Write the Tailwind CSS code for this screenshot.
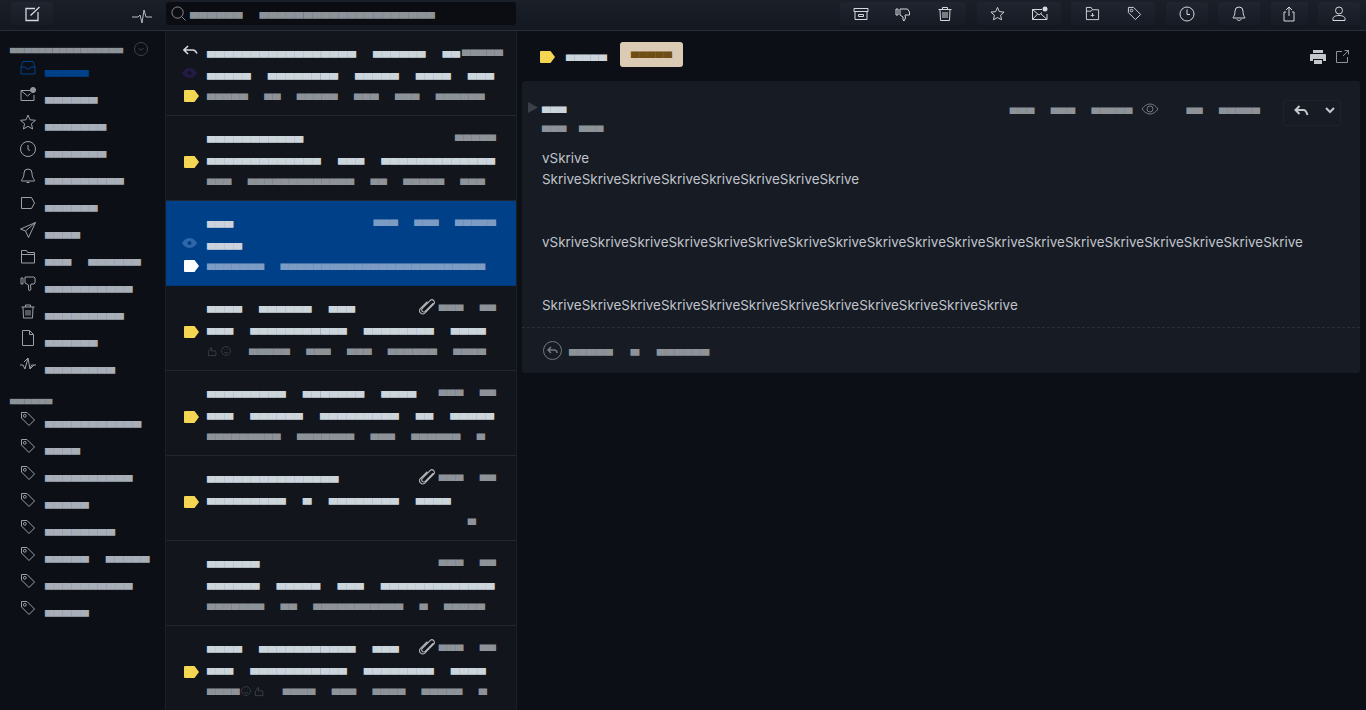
<!DOCTYPE html>
<html lang="en">
<head>
  <meta charset="UTF-8">
  <title>Mail</title>
  <script src="https://cdn.jsdelivr.net/npm/@tailwindcss/browser@4"></script>
</head>
<body class="h-[710px] overflow-hidden bg-[#0c0f16] font-['DejaVu_Sans',sans-serif] leading-none">
  <svg class="hidden">
    <symbol id="flag" viewBox="0 0 15 12"><path fill="currentColor" d="M1 0h9.500L15 6l-4.500 6H1a1 1 0 0 1-1-1V1a1 1 0 0 1 1-1z"/></symbol>
    <symbol id="tag" viewBox="0 0 16 16"><path fill="none" stroke="currentColor" d="M1.500 1.500h5.500l7.500 7.500-5.500 5.500-7.500-7.500z" stroke-linejoin="round"/><circle cx="4.800" cy="4.800" r="1.400" fill="none" stroke="currentColor"/></symbol>
    <symbol id="clip" viewBox="0 0 16 16"><path fill="none" stroke="currentColor" stroke-width="1.100" stroke-linecap="round" d="M14 4.500 6.200 12.300a2 2 0 0 1-2.900-2.900l7.800-7.800a1.300 1.300 0 0 1 3.600 3.600L5.800 14.100A3.200 3.200 0 0 1 1.300 9.600L8 3"/></symbol>
    <symbol id="thumb" viewBox="0 0 16 16"><path fill="none" stroke="currentColor" d="M2 14V8l4-6 1 1-1 4h6l1 2v5H3z"/></symbol>
    <symbol id="smile" viewBox="0 0 16 16"><circle cx="8" cy="8" r="7" fill="none" stroke="currentColor"/><path fill="none" stroke="currentColor" d="M5 6h1M10 6h1M5 10c1.500 1.500 4.500 1.500 6 0"/></symbol>
  </svg>

  <header class="h-[31px] flex border-b border-[#28303c] bg-gradient-to-b from-[#1a1f28] to-[#141820]">
    <div class="w-[166px] flex items-start pt-[2px] pl-[11px]">
      <button class="w-[42px] h-[23px] rounded-[3px] bg-gradient-to-b from-[#1f2530] to-[#171b24] flex items-center justify-center text-[#d5d8dc]">
        <svg class="w-[16px] h-[16px]" viewBox="0 0 16 16" fill="none" stroke="currentColor" stroke-width="1.300"><path d="M11 2.500H2v12h12V6M6.500 9.500l9-8.500"/></svg>
      </button>
      <svg class="w-[20px] h-[16px] ml-[79px] mt-[6px] text-[#b8bcc2]" viewBox="0 0 20 16" fill="none" stroke="currentColor"><path d="M0 9h6l2-2 2 8 2-13 2 7h6"/></svg>
    </div>
    <div class="w-[351px] pt-[2px] pr-[1px]">
      <div class="h-[23px] rounded-[3px] bg-[#0b0d13] flex items-center pl-[5px] text-[11.400px] text-[#8e939a] [word-spacing:13.400px]">
        <svg class="w-[15px] h-[15px] mr-[4px] text-[#8e939a] shrink-0" viewBox="0 0 16 16" fill="none" stroke="currentColor"><circle cx="7" cy="7" r="6"/><path d="m11.500 11.500 4 4"/></svg>
        <span class="block whitespace-pre pb-[2px]">▄▄▄▄▄▄ ▄▄▄▄▄▄▄▄▄▄▄▄▄▄▄▄▄▄▄▄</span>
      </div>
    </div>
    <div class="flex-1 flex justify-end gap-[10.500px] pt-[2px] pr-[6px] text-[#d5d8dc]">
      <div class="h-[23px] w-[126px] rounded-[3px] bg-gradient-to-b from-[#1f2530] to-[#171b24] flex">
        <span class="w-[42px] flex items-center justify-center"><svg class="w-[16px] h-[16px]" viewBox="0 0 16 16" fill="none" stroke="currentColor"><path d="M1 2.500h14v3H1zM2 5.500v8h12v-8M5.500 8.500h5v2h-5z"/></svg></span>
        <span class="w-[42px] flex items-center justify-center"><svg class="w-[16px] h-[16px]" viewBox="0 0 16 16" fill="none" stroke="currentColor"><path d="M1 3h2v6H1zM5 3h7.500l2 3v3h-4.500l.5 3-1.500 3-1-1v-3l-3-2z"/></svg></span>
        <span class="w-[42px] flex items-center justify-center"><svg class="w-[16px] h-[16px]" viewBox="0 0 16 16" fill="none" stroke="currentColor"><path d="M1.500 3.500h13M5.500 3.500v-2h5v2M3 3.500l.5 11h9l.5-11M6 6v6M8 6v6M10 6v6"/></svg></span>
      </div>
      <div class="h-[23px] w-[84px] rounded-[3px] bg-gradient-to-b from-[#1f2530] to-[#171b24] flex">
        <span class="w-[42px] flex items-center justify-center"><svg class="w-[15px] h-[15px]" viewBox="0 0 16 16" fill="none" stroke="currentColor"><path d="m8 1.500 2 4.500 5 .5-3.700 3.300 1 4.900L8 12.300l-4.300 2.400 1-4.900L1 6.500 6 6z"/></svg></span>
        <span class="w-[42px] flex items-center justify-center"><svg class="w-[16px] h-[16px]" viewBox="0 0 16 16" fill="none" stroke="currentColor"><path d="M10 3.500H.5v10h14.500V8M.5 3.500 7 9l3-2.500M.5 13.500 5.500 8M15 13.500 9 8"/><circle cx="13" cy="3" r="2.500" fill="#d5d8dc" stroke="none"/></svg></span>
      </div>
      <div class="h-[23px] w-[84px] rounded-[3px] bg-gradient-to-b from-[#1f2530] to-[#171b24] flex">
        <span class="w-[42px] flex items-center justify-center"><svg class="w-[15px] h-[15px]" viewBox="0 0 16 16" fill="none" stroke="currentColor"><path d="M1.500 14.500v-13h5l1.500 2.500h6.500v10.500zM1.500 5.500h5l1.500-1.500M8 7.500v4M6 10h4"/></svg></span>
        <span class="w-[42px] flex items-center justify-center"><svg class="w-[15px] h-[15px]"><use href="#tag"/></svg></span>
      </div>
      <div class="h-[23px] w-[42px] rounded-[3px] bg-gradient-to-b from-[#1f2530] to-[#171b24] flex items-center justify-center">
        <svg class="w-[16px] h-[16px]" viewBox="0 0 16 16" fill="none" stroke="currentColor"><circle cx="8" cy="8" r="7"/><path d="M8 3.500V8.500h3"/></svg>
      </div>
      <div class="h-[23px] w-[42px] rounded-[3px] bg-gradient-to-b from-[#1f2530] to-[#171b24] flex items-center justify-center">
        <svg class="w-[16px] h-[16px]" viewBox="0 0 16 16" fill="none" stroke="currentColor"><path d="M8 1a4 4 0 0 0-4 4c0 5-2 6-2 7h12c0-1-2-2-2-7a4 4 0 0 0-4-4zM6 13c0 2 4 2 4 0"/></svg>
      </div>
      <div class="h-[23px] w-[37px] rounded-[3px] bg-gradient-to-b from-[#1f2530] to-[#171b24] flex items-center justify-center">
        <svg class="w-[16px] h-[16px]" viewBox="0 0 16 16" fill="none" stroke="currentColor"><path d="M5 6H3v9h10V6h-2M8 10V1M5 4l3-3 3 3"/></svg>
      </div>
      <div class="h-[23px] w-[42px] rounded-[3px] bg-gradient-to-b from-[#1f2530] to-[#171b24] flex items-center justify-center">
        <svg class="w-[16px] h-[16px]" viewBox="0 0 16 16" fill="none" stroke="currentColor"><circle cx="8" cy="4.500" r="3.500"/><path d="M2 14.500v-2c0-2 3-3 6-3s6 1 6 3v2z"/></svg>
      </div>
    </div>
  </header>

  <div class="flex h-[679px]">
    <!-- sidebar -->
    <aside class="w-[166px] border-r border-[#1b1f27] bg-[#0c0f16]">
      <div class="h-[26px] pt-[12px] pl-[10px] flex items-start text-[9.200px] text-[#8e939a]">
        <span class="whitespace-pre">▄▄▄▄▄▄▄▄▄▄▄▄▄▄▄▄</span>
        <svg class="w-[14px] h-[14px] ml-[11px] -mt-[1px] text-[#3f434b]" viewBox="0 0 14 14" fill="none" stroke="currentColor"><circle cx="7" cy="7" r="6.500"/><path d="m4.500 6 2.500 2.500L9.500 6"/></svg>
      </div>
      <nav class="text-[11.400px] text-[#a9afb9] [word-spacing:13.400px] [&_svg]:text-[#9ca1a9]">
        <a class="h-[27px] flex items-center pl-[20px] text-[#004289]"><svg class="w-[16px] h-[16px] -mt-[6px] mr-[9px] !text-[#004289]" viewBox="0 0 16 16" fill="none" stroke="currentColor"><path d="M3 1.500h10l2 5.500v7H1V7zM1 7h4.500l1 2h3l1-2H15"/></svg><span class="whitespace-pre">▄▄▄▄▄</span></a>
        <a class="h-[27px] flex items-center pl-[20px]"><svg class="w-[16px] h-[16px] -mt-[6px] mr-[9px]" viewBox="0 0 16 16" fill="none" stroke="currentColor"><path d="M10 3.500H1v10h13V8M1 3.500 7.500 9l3-2.500"/><circle cx="13" cy="3" r="2.500" fill="#8e939a"/></svg><span class="whitespace-pre">▄▄▄▄▄▄</span></a>
        <a class="h-[27px] flex items-center pl-[20px]"><svg class="w-[16px] h-[16px] -mt-[6px] mr-[9px]" viewBox="0 0 16 16" fill="none" stroke="currentColor"><path d="m8 1 2 4.800 5.500.5-4.100 3.500 1.200 5.200L8 12.300 3.400 15l1.200-5.200L.5 6.300 6 5.800z"/></svg><span class="whitespace-pre">▄▄▄▄▄▄▄</span></a>
        <a class="h-[27px] flex items-center pl-[20px]"><svg class="w-[16px] h-[16px] -mt-[6px] mr-[9px]" viewBox="0 0 16 16" fill="none" stroke="currentColor"><circle cx="8" cy="8" r="7.500"/><path d="M8 4v4.500l2 1"/></svg><span class="whitespace-pre">▄▄▄▄▄▄▄</span></a>
        <a class="h-[27px] flex items-center pl-[20px]"><svg class="w-[16px] h-[16px] -mt-[6px] mr-[9px]" viewBox="0 0 16 16" fill="none" stroke="currentColor"><path d="M8 1a4 4 0 0 0-4 4c0 5-2.500 6-2.500 8h13c0-2-2.500-3-2.500-8a4 4 0 0 0-4-4zM6.500 14.500h3"/></svg><span class="whitespace-pre">▄▄▄▄▄▄▄▄▄</span></a>
        <a class="h-[27px] flex items-center pl-[20px]"><svg class="w-[16px] h-[16px] -mt-[6px] mr-[9px]" viewBox="0 0 16 16" fill="none" stroke="currentColor"><path d="M1.500 2.500h10l3 5.500-3 5.500h-10z"/></svg><span class="whitespace-pre">▄▄▄▄▄▄</span></a>
        <a class="h-[27px] flex items-center pl-[20px]"><svg class="w-[16px] h-[16px] -mt-[6px] mr-[9px]" viewBox="0 0 16 16" fill="none" stroke="currentColor"><path d="M15.500.5.500 7l5 2 3 6.500zM15.500.5l-10 8.500"/></svg><span class="whitespace-pre">▄▄▄▄</span></a>
        <a class="h-[27px] flex items-center pl-[20px]"><svg class="w-[16px] h-[16px] -mt-[6px] mr-[9px]" viewBox="0 0 16 16" fill="none" stroke="currentColor"><path d="M1.500 14V1.500h5l1 2h7V14zM1.500 5.500h13"/></svg><span class="whitespace-pre">▄▄▄ ▄▄▄▄▄▄</span></a>
        <a class="h-[27px] flex items-center pl-[20px]"><svg class="w-[16px] h-[16px] -mt-[6px] mr-[9px]" viewBox="0 0 16 16" fill="none" stroke="currentColor"><path d="M1 2h2v6H1zM5 1h9l1 1v5l-1 1h-3l-.5 2 .5 3-1.500 2-1-2V9L5 7z"/></svg><span class="whitespace-pre">▄▄▄▄▄▄▄▄▄▄</span></a>
        <a class="h-[27px] flex items-center pl-[20px]"><svg class="w-[16px] h-[16px] -mt-[6px] mr-[9px]" viewBox="0 0 16 16" fill="none" stroke="currentColor"><path d="M1.500 4h13M5.500 4V2h5v2M3 4l.5 11h9l.5-11M6 7v5.500M8 7v5.500M10 7v5.500"/></svg><span class="whitespace-pre">▄▄▄▄▄▄▄▄▄</span></a>
        <a class="h-[27px] flex items-center pl-[20px]"><svg class="w-[16px] h-[16px] -mt-[6px] mr-[9px]" viewBox="0 0 16 16" fill="none" stroke="currentColor"><path d="M2.500.5h7l4 4v11h-11zM9.500.5v4h4"/></svg><span class="whitespace-pre">▄▄▄▄▄▄</span></a>
        <a class="h-[27px] flex items-center pl-[20px]"><svg class="w-[16px] h-[16px] -mt-[6px] mr-[9px]" viewBox="0 0 16 16" fill="none" stroke="currentColor"><path d="M0 8h3l2 4 3-11 2 11 1.500-4H16M4 5l4-4M10 12l4-4"/></svg><span class="whitespace-pre">▄▄▄▄▄▄▄▄</span></a>
      </nav>
      <div class="h-[27px] pt-[13px] pl-[10px] text-[9.200px] text-[#8e939a]"><span class="whitespace-pre">▄▄▄▄▄▄</span></div>
      <nav class="text-[11.400px] text-[#a9afb9] [word-spacing:13.400px] [&_svg]:text-[#9ca1a9]">
        <a class="h-[27px] flex items-center pl-[20px]"><svg class="w-[16px] h-[16px] -mt-[6px] mr-[9px]"><use href="#tag"/></svg><span class="whitespace-pre">▄▄▄▄▄▄▄▄▄▄▄</span></a>
        <a class="h-[27px] flex items-center pl-[20px]"><svg class="w-[16px] h-[16px] -mt-[6px] mr-[9px]"><use href="#tag"/></svg><span class="whitespace-pre">▄▄▄▄</span></a>
        <a class="h-[27px] flex items-center pl-[20px]"><svg class="w-[16px] h-[16px] -mt-[6px] mr-[9px]"><use href="#tag"/></svg><span class="whitespace-pre">▄▄▄▄▄▄▄▄▄▄</span></a>
        <a class="h-[27px] flex items-center pl-[20px]"><svg class="w-[16px] h-[16px] -mt-[6px] mr-[9px]"><use href="#tag"/></svg><span class="whitespace-pre">▄▄▄▄▄</span></a>
        <a class="h-[27px] flex items-center pl-[20px]"><svg class="w-[16px] h-[16px] -mt-[6px] mr-[9px]"><use href="#tag"/></svg><span class="whitespace-pre">▄▄▄▄▄▄▄▄</span></a>
        <a class="h-[27px] flex items-center pl-[20px]"><svg class="w-[16px] h-[16px] -mt-[6px] mr-[9px]"><use href="#tag"/></svg><span class="whitespace-pre">▄▄▄▄▄ ▄▄▄▄▄</span></a>
        <a class="h-[27px] flex items-center pl-[20px]"><svg class="w-[16px] h-[16px] -mt-[6px] mr-[9px]"><use href="#tag"/></svg><span class="whitespace-pre">▄▄▄▄▄▄▄▄▄▄</span></a>
        <a class="h-[27px] flex items-center pl-[20px]"><svg class="w-[16px] h-[16px] -mt-[6px] mr-[9px]"><use href="#tag"/></svg><span class="whitespace-pre">▄▄▄▄▄</span></a>
      </nav>
    </aside>

    <!-- message list -->
    <section class="w-[351px] border-r border-[#1b1f27] bg-[#12151c] overflow-hidden text-[11.400px] text-[#ccd5dc] [word-spacing:13.400px]">
      <div class="h-[85px] border-b border-[#22262f] pt-[10px]">
        <div class="h-[22px] flex items-center">
          <span class="w-[41px] pl-[17px] shrink-0 text-[#d5d8dc]"><svg class="w-[15px] h-[12px] -translate-y-[1px]" viewBox="0 0 15 12" fill="none" stroke="currentColor" stroke-width="1.600"><path d="M5 1 1 5l4 4M1 5h9c2 0 3 1.500 4 3.500"/></svg></span>
          <span class="whitespace-pre w-[255px]">▄▄▄▄▄▄▄▄▄▄▄▄▄▄▄▄▄ ▄▄▄▄▄▄ ▄▄</span>
          <span class="text-[10.650px] text-[#8e939a] -mt-[4px]">▄▄▄▄▄</span>
        </div>
        <div class="h-[22px] flex items-center">
          <span class="w-[41px] pl-[16px] shrink-0 text-[#231a45]"><svg class="w-[15px] h-[10px] -translate-y-[1px]" viewBox="0 0 15 10"><path fill="currentColor" d="M7.500 0C11 0 14 3 15 5c-1 2-4 5-7.500 5S1 7 0 5c1-2 4-5 7.500-5z"/><circle cx="7.500" cy="5" r="2" fill="#12151c"/></svg></span>
          <span class="whitespace-pre">▄▄▄▄▄ ▄▄▄▄▄▄▄▄ ▄▄▄▄▄ ▄▄▄▄ ▄▄▄</span>
        </div>
        <div class="h-[18px] flex items-center text-[10.650px] text-[#8e939a] [word-spacing:12.900px]">
          <span class="w-[41px] pl-[18px] shrink-0 text-[#f5d652]"><svg class="w-[15px] h-[12px] translate-y-[2px]"><use href="#flag"/></svg></span>
          <span class="whitespace-pre">▄▄▄▄▄ ▄▄ ▄▄▄▄▄ ▄▄▄ ▄▄▄ ▄▄▄▄▄▄</span>
        </div>
      </div>

      <div class="h-[85px] border-b border-[#22262f] pt-[10px]">
        <div class="h-[22px] flex items-center">
          <span class="w-[41px] shrink-0"></span>
          <span class="whitespace-pre">▄▄▄▄▄▄▄▄▄▄▄</span>
          <span class="ml-auto pr-[20px] text-[10.650px] text-[#8e939a] -mt-[4px]">▄▄▄▄▄</span>
        </div>
        <div class="h-[22px] flex items-center">
          <span class="w-[41px] pl-[18px] shrink-0 text-[#f5d652]"><svg class="w-[15px] h-[12px] translate-y-[3px]"><use href="#flag"/></svg></span>
          <span class="whitespace-pre">▄▄▄▄▄▄▄▄▄▄▄▄▄ ▄▄▄ ▄▄▄▄▄▄▄▄▄▄▄▄▄</span>
        </div>
        <div class="h-[18px] flex items-center text-[10.650px] text-[#8e939a] [word-spacing:12.900px]">
          <span class="w-[41px] shrink-0"></span>
          <span class="whitespace-pre">▄▄▄ ▄▄▄▄▄▄▄▄▄▄▄▄▄ ▄▄ ▄▄▄▄▄ ▄▄▄</span>
        </div>
      </div>

      <div class="h-[85px] border-b border-[#003a7a] bg-[#004088] pt-[10px] text-[#ccd3dc]">
        <div class="h-[22px] flex items-center">
          <span class="w-[41px] shrink-0"></span>
          <span class="whitespace-pre">▄▄▄</span>
          <span class="ml-auto pr-[20px] text-[10.650px] text-[#7d9cc3] [word-spacing:12.900px] whitespace-pre -mt-[4px]">▄▄▄ ▄▄▄ ▄▄▄▄▄</span>
        </div>
        <div class="h-[22px] flex items-center">
          <span class="w-[41px] pl-[16px] shrink-0 text-[#2f66a8]"><svg class="w-[15px] h-[10px] -translate-y-[1px]" viewBox="0 0 15 10"><path fill="currentColor" d="M7.500 0C11 0 14 3 15 5c-1 2-4 5-7.500 5S1 7 0 5c1-2 4-5 7.500-5z"/><circle cx="7.500" cy="5" r="2" fill="#004088"/></svg></span>
          <span class="whitespace-pre">▄▄▄▄</span>
        </div>
        <div class="h-[18px] flex items-center text-[10.650px] text-[#7d9cc3] [word-spacing:12.900px]">
          <span class="w-[41px] pl-[18px] shrink-0 text-white"><svg class="w-[15px] h-[12px] translate-y-[2px]"><use href="#flag"/></svg></span>
          <span class="whitespace-pre">▄▄▄▄▄▄▄ ▄▄▄▄▄▄▄▄▄▄▄▄▄▄▄▄▄▄▄▄▄▄▄▄▄</span>
        </div>
      </div>

      <div class="h-[85px] border-b border-[#22262f] pt-[10px]">
        <div class="h-[22px] flex items-center">
          <span class="w-[41px] shrink-0"></span>
          <span class="whitespace-pre">▄▄▄▄ ▄▄▄▄▄▄ ▄▄▄</span>
          <span class="ml-auto pr-[20px] flex items-center text-[10.650px] text-[#8e939a] [word-spacing:12.900px] whitespace-pre -mt-[4px]"><svg class="w-[16px] h-[16px] mr-[4px] text-[#b5b7ba] translate-y-[2px]"><use href="#clip"/></svg>▄▄▄ ▄▄</span>
        </div>
        <div class="h-[22px] flex items-center">
          <span class="w-[41px] pl-[18px] shrink-0 text-[#f5d652]"><svg class="w-[15px] h-[12px] translate-y-[3px]"><use href="#flag"/></svg></span>
          <span class="whitespace-pre">▄▄▄ ▄▄▄▄▄▄▄▄▄▄▄ ▄▄▄▄▄▄▄▄ ▄▄▄▄</span>
        </div>
        <div class="h-[18px] flex items-center text-[10.650px] text-[#8e939a] [word-spacing:12.900px]">
          <span class="w-[41px] shrink-0"></span>
          <svg class="w-[11px] h-[11px] translate-y-[2px] text-[#4a4e56]"><use href="#thumb"/></svg>
          <svg class="w-[10px] h-[10px] translate-y-[2px] ml-[3px] mr-[18px] text-[#4a4e56]"><use href="#smile"/></svg>
          <span class="whitespace-pre">▄▄▄▄▄ ▄▄▄ ▄▄▄ ▄▄▄▄▄▄ ▄▄▄▄</span>
        </div>
      </div>

      <div class="h-[85px] border-b border-[#22262f] pt-[10px]">
        <div class="h-[22px] flex items-center">
          <span class="w-[41px] shrink-0"></span>
          <span class="whitespace-pre">▄▄▄▄▄▄▄▄▄ ▄▄▄▄▄▄▄ ▄▄▄▄</span>
          <span class="ml-auto pr-[20px] text-[10.650px] text-[#8e939a] [word-spacing:12.900px] whitespace-pre -mt-[4px]">▄▄▄ ▄▄</span>
        </div>
        <div class="h-[22px] flex items-center">
          <span class="w-[41px] pl-[18px] shrink-0 text-[#f5d652]"><svg class="w-[15px] h-[12px] translate-y-[3px]"><use href="#flag"/></svg></span>
          <span class="whitespace-pre">▄▄▄ ▄▄▄▄▄▄ ▄▄▄▄▄▄▄▄▄ ▄▄ ▄▄▄▄▄</span>
        </div>
        <div class="h-[18px] flex items-center text-[10.650px] text-[#8e939a] [word-spacing:12.900px]">
          <span class="w-[41px] shrink-0"></span>
          <span class="whitespace-pre">▄▄▄▄▄▄▄▄▄ ▄▄▄▄▄▄▄ ▄▄▄ ▄▄▄▄▄▄ ▄</span>
        </div>
      </div>

      <div class="h-[85px] border-b border-[#22262f] pt-[10px]">
        <div class="h-[22px] flex items-center">
          <span class="w-[41px] shrink-0"></span>
          <span class="whitespace-pre">▄▄▄▄▄▄▄▄▄▄▄▄▄▄▄</span>
          <span class="ml-auto pr-[20px] flex items-center text-[10.650px] text-[#8e939a] [word-spacing:12.900px] whitespace-pre -mt-[4px]"><svg class="w-[16px] h-[16px] mr-[4px] text-[#b5b7ba] translate-y-[2px]"><use href="#clip"/></svg>▄▄▄ ▄▄</span>
        </div>
        <div class="h-[22px] flex items-center">
          <span class="w-[41px] pl-[18px] shrink-0 text-[#f5d652]"><svg class="w-[15px] h-[12px] translate-y-[3px]"><use href="#flag"/></svg></span>
          <span class="whitespace-pre">▄▄▄▄▄▄▄▄▄ ▄ ▄▄▄▄▄▄▄▄ ▄▄▄▄</span>
        </div>
        <div class="h-[18px] flex items-center justify-end pr-[40px] text-[10.650px] text-[#8e939a]">▄</div>
      </div>

      <div class="h-[85px] border-b border-[#22262f] pt-[10px]">
        <div class="h-[22px] flex items-center">
          <span class="w-[41px] shrink-0"></span>
          <span class="whitespace-pre">▄▄▄▄▄▄</span>
          <span class="ml-auto pr-[20px] text-[10.650px] text-[#8e939a] [word-spacing:12.900px] whitespace-pre -mt-[4px]">▄▄▄ ▄▄</span>
        </div>
        <div class="h-[22px] flex items-center">
          <span class="w-[41px] shrink-0"></span>
          <span class="whitespace-pre">▄▄▄▄▄▄ ▄▄▄▄▄ ▄▄▄ ▄▄▄▄▄▄▄▄▄▄▄▄▄</span>
        </div>
        <div class="h-[18px] flex items-center text-[10.650px] text-[#8e939a] [word-spacing:12.900px]">
          <span class="w-[41px] shrink-0"></span>
          <span class="whitespace-pre">▄▄▄▄▄▄▄ ▄▄ ▄▄▄▄▄▄▄▄▄▄▄ ▄ ▄▄▄▄▄</span>
        </div>
      </div>

      <div class="h-[85px] pt-[10px]">
        <div class="h-[22px] flex items-center">
          <span class="w-[41px] shrink-0"></span>
          <span class="whitespace-pre">▄▄▄▄ ▄▄▄▄▄▄▄▄▄▄▄ ▄▄▄</span>
          <span class="ml-auto pr-[20px] flex items-center text-[10.650px] text-[#8e939a] [word-spacing:12.900px] whitespace-pre -mt-[4px]"><svg class="w-[16px] h-[16px] mr-[4px] text-[#b5b7ba] translate-y-[2px]"><use href="#clip"/></svg>▄▄▄ ▄▄</span>
        </div>
        <div class="h-[22px] flex items-center">
          <span class="w-[41px] pl-[18px] shrink-0 text-[#f5d652]"><svg class="w-[15px] h-[12px] translate-y-[3px]"><use href="#flag"/></svg></span>
          <span class="whitespace-pre">▄▄▄ ▄▄▄▄▄▄▄▄▄▄▄ ▄▄▄▄▄▄▄▄ ▄▄▄▄</span>
        </div>
        <div class="h-[18px] flex items-center text-[10.650px] text-[#8e939a] [word-spacing:12.900px]">
          <span class="w-[41px] shrink-0"></span>
          <span class="whitespace-pre">▄▄▄▄</span>
          <svg class="w-[10px] h-[10px] translate-y-[2px] ml-[1px] text-[#4a4e56]"><use href="#smile"/></svg>
          <svg class="w-[11px] h-[11px] translate-y-[2px] ml-[3px] mr-[18px] text-[#4a4e56]"><use href="#thumb"/></svg>
          <span class="whitespace-pre">▄▄▄▄ ▄▄▄ ▄▄▄▄ ▄▄▄▄▄ ▄</span>
        </div>
      </div>
    </section>

    <!-- message view -->
    <main class="flex-1 bg-[#0c0f16]">
      <div class="h-[50px] flex items-center pl-[23px] pr-[17px] text-[10.650px] text-[#ccd5dc]">
        <svg class="w-[15px] h-[12px] mt-[2px] text-[#f5d652]"><use href="#flag"/></svg>
        <span class="ml-[11px] -mt-[2px] whitespace-pre">▄▄▄▄▄</span>
        <span class="ml-[13px] -mt-[4px] h-[25px] w-[63px] pb-[4px] rounded-[3px] bg-[#dbcbb5] text-[#6e4e15] flex items-center justify-center">▄▄▄▄▄</span>
        <svg class="w-[16px] h-[14px] ml-auto mt-[1px] text-[#c4c7cb]" viewBox="0 0 16 14"><path fill="currentColor" d="M3 0h10v3H3zM1 4h14a1 1 0 0 1 1 1v6h-3V9H3v2H0V5a1 1 0 0 1 1-1zM4 10h8v4H4z"/></svg>
        <svg class="w-[13px] h-[13px] ml-[10px] text-[#8e939a]" viewBox="0 0 13 13" fill="none" stroke="currentColor"><path d="M6 1.500H.5v11h11V7M7 6l5.500-5.500M8.500.5h4v4"/></svg>
      </div>
      <article class="relative h-[292px] ml-[5px] mr-[6px] rounded-[3px] bg-[#171b24]">
        <div class="h-[67px] flex pl-[6px] pr-[19px] pt-[21px] text-[10.650px] text-[#8e939a] [word-spacing:12.900px]">
          <svg class="w-[10px] h-[11px] text-[#3a3f4a] shrink-0" viewBox="0 0 10 11"><path fill="currentColor" d="M0 0l10 5.500L0 11z"/></svg>
          <div class="ml-[4px]">
            <div class="h-[19px] text-[#ccd5dc]">▄▄▄</div>
            <div class="whitespace-pre [word-spacing:9px]">▄▄▄ ▄▄▄</div>
          </div>
          <div class="ml-auto flex items-start pt-[1px]">
            <span class="whitespace-pre">▄▄▄ ▄▄▄ ▄▄▄▄▄</span>
            <svg class="w-[18px] h-[12px] ml-[9px] text-[#73777e]" viewBox="0 0 18 12" fill="none" stroke="currentColor"><path d="M1 6c2-3 5-5 8-5s6 2 8 5c-2 3-5 5-8 5S3 9 1 6z"/><circle cx="9" cy="6" r="3"/></svg>
            <span class="whitespace-pre ml-[27px]">▄▄ ▄▄▄▄▄</span>
            <div class="ml-[23px] -mt-[3px] w-[58px] h-[26px] rounded-[3px] border border-[#1d222b] flex items-center text-[#c4c7cb]">
              <svg class="w-[15px] h-[12px] ml-[10px] -translate-y-[2px]" viewBox="0 0 15 12" fill="none" stroke="currentColor" stroke-width="2"><path d="M5.500 1 1.500 5l4 4M1.500 5h8c2 0 3 1.500 4 5"/></svg>
              <svg class="w-[10px] h-[7px] ml-[16px] -translate-y-[3px]" viewBox="0 0 10 7" fill="none" stroke="currentColor" stroke-width="2"><path d="m1 1 4 4 4-4"/></svg>
            </div>
          </div>
        </div>
        <div class="pl-[20px] font-['Inter',sans-serif] text-[13.440px] leading-[21px] text-[#c0c4cb] whitespace-pre">vSkrive
SkriveSkriveSkriveSkriveSkriveSkriveSkriveSkrive


vSkriveSkriveSkriveSkriveSkriveSkriveSkriveSkriveSkriveSkriveSkriveSkriveSkriveSkriveSkriveSkriveSkriveSkriveSkrive


SkriveSkriveSkriveSkriveSkriveSkriveSkriveSkriveSkriveSkriveSkriveSkrive</div>
        <div class="mt-[11px] border-t border-dashed border-[#2a2e37] h-[46px] flex items-center pl-[21px] text-[11.400px] text-[#8e939a] [word-spacing:14px]">
          <svg class="w-[19px] h-[19px] mr-[7px] text-[#73777e]" viewBox="0 0 19 19" fill="none" stroke="currentColor"><circle cx="9.500" cy="9.500" r="9"/><path stroke-width="1.500" d="M8 6 5 9l3 3M5 9h6c2 0 3 1 3 3"/></svg>
          <span class="block whitespace-pre pb-[2px]">▄▄▄▄▄ ▄ ▄▄▄▄▄▄</span>
        </div>
      </article>
    </main>
  </div>
</body>
</html>
